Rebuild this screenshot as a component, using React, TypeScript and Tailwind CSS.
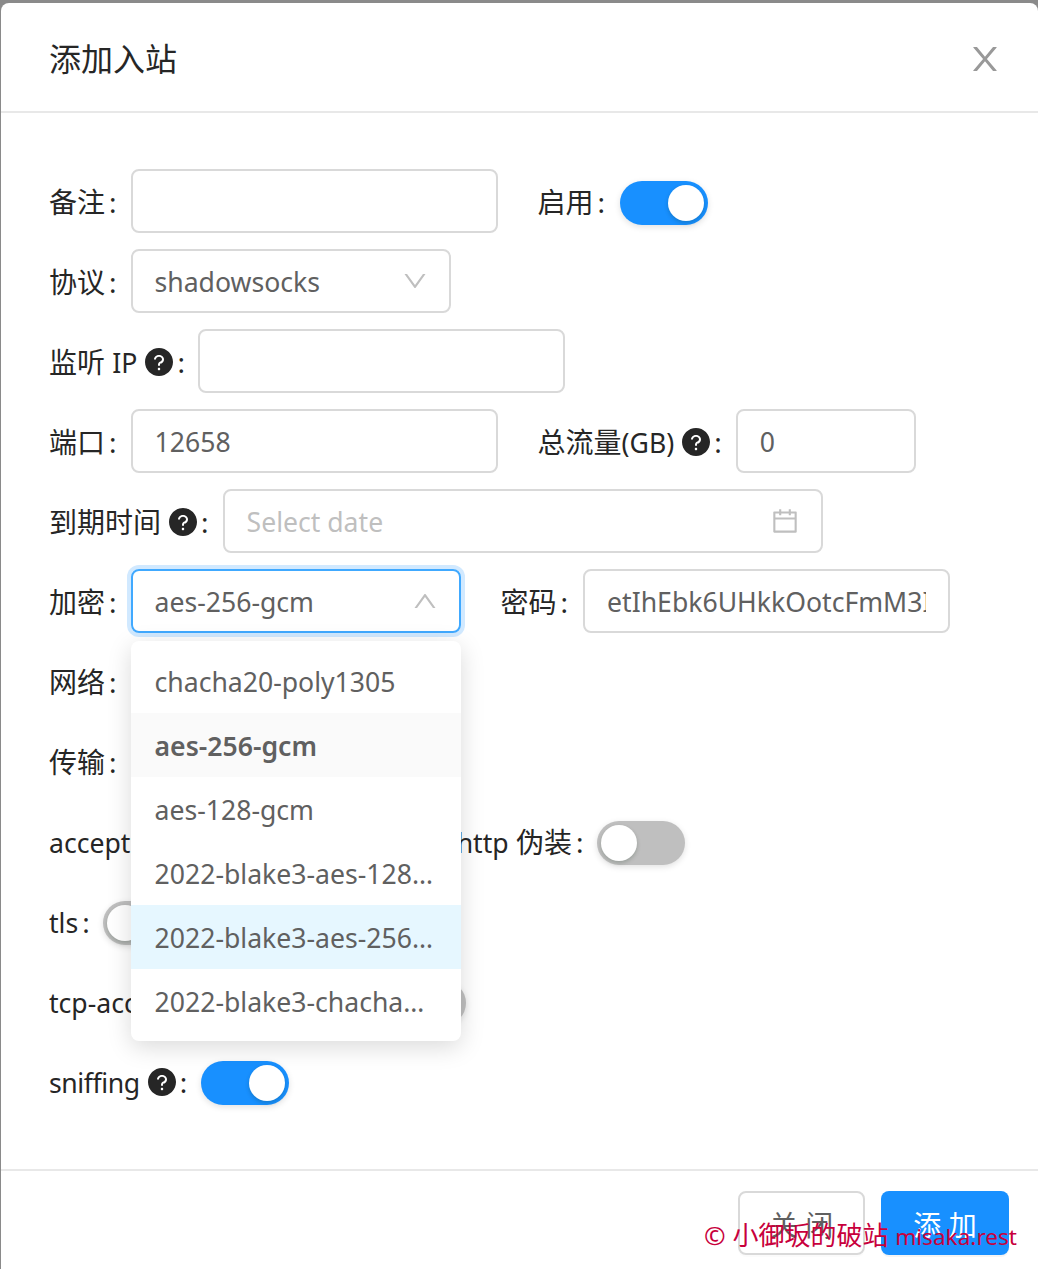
import React from 'react';

const questionPath =
  'M512 64C264.6 64 64 264.6 64 512s200.6 448 448 448 448-200.6 448-448S759.4 64 512 64zm0 708c-22.1 0-40-17.9-40-40s17.9-40 40-40 40 17.9 40 40-17.9 40-40 40zm62.9-219.5a48.3 48.3 0 0 0-30.9 44.8V620c0 4.4-3.6 8-8 8h-48c-4.4 0-8-3.6-8-8v-21.5c0-23.1 6.7-45.9 19.9-64.9 12.9-18.6 30.9-32.8 52.1-40.9 34-13.1 56-41.6 56-72.7 0-44.1-43.1-80-96-80s-96 35.9-96 80v7.6c0 4.4-3.6 8-8 8h-48c-4.4 0-8-3.6-8-8V432c0-39.3 17.2-76 48.4-103.3C430.4 302.4 470 288 512 288s81.6 14.5 111.6 40.7C654.8 356 672 392.7 672 432c0 57.8-38.1 109.8-97.1 132.5z';
const downPath =
  'M884 256h-75c-5.1 0-9.9 2.5-12.9 6.6L512 654.2 227.9 262.6c-3-4.1-7.8-6.6-12.9-6.6h-75c-6.5 0-10.3 7.4-6.5 12.7l352.6 486.1c12.8 17.6 39 17.6 51.7 0l352.6-486.1c3.9-5.3.1-12.7-6.4-12.7z';
const upPath =
  'M890.5 755.3L537.9 269.2c-12.8-17.6-39-17.6-51.7 0L133.5 755.3A8 8 0 0 0 140 768h75c5.1 0 9.9-2.5 12.9-6.6L512 369.8l284.1 391.6c3 4.1 7.8 6.6 12.9 6.6h75c6.5 0 10.3-7.4 6.5-12.7z';
const calendarPath =
  'M880 184H712v-64c0-4.4-3.6-8-8-8h-56c-4.4 0-8 3.6-8 8v64H384v-64c0-4.4-3.6-8-8-8h-56c-4.4 0-8 3.6-8 8v64H144c-17.7 0-32 14.3-32 32v664c0 17.7 14.3 32 32 32h736c17.7 0 32-14.3 32-32V216c0-17.7-14.3-32-32-32zm-40 656H184V460h656v380zM184 392V256h128v48c0 4.4 3.6 8 8 8h56c4.4 0 8-3.6 8-8v-48h256v48c0 4.4 3.6 8 8 8h56c4.4 0 8-3.6 8-8v-48h128v136H184z';
const closePath =
  'M563.8 512l262.5-312.9c4.4-5.2.7-13.1-6.1-13.1h-79.8c-4.7 0-9.2 2.1-12.3 5.7L511.6 449.8 295.1 191.7c-3-3.6-7.5-5.7-12.3-5.7H203c-6.8 0-10.5 7.9-6.1 13.1L459.4 512 196.9 824.9A7.95 7.95 0 0 0 203 838h79.8c4.7 0 9.2-2.1 12.3-5.7l216.5-258.1 216.5 258.1c3 3.6 7.5 5.7 12.3 5.7h79.8c6.8 0 10.5-7.9 6.1-13.1L563.8 512z';

function Icon({ d, className }: { d: string; className?: string }) {
  return (
    <svg viewBox="0 0 1024 1024" fill="currentColor" className={className}>
      <path d={d} />
    </svg>
  );
}

function Help() {
  return (
    <svg viewBox="64 64 896 896" fill="#262626" className="ml-2 h-7 w-7 shrink-0">
      <path d={questionPath} />
    </svg>
  );
}

// latin runs are a bit smaller than the cjk ones in the screenshot
function Lat({ children, className = '' }: { children: React.ReactNode; className?: string }) {
  return <span className={`text-[26.6px] ${className}`}>{children}</span>;
}

function Label({
  children,
  help,
  colon = 'mr-3.5',
}: {
  children: React.ReactNode;
  help?: boolean;
  colon?: string;
}) {
  return (
    <div className="flex shrink-0 items-center whitespace-nowrap pt-0.5 text-[#262626]">
      <span>{children}</span>
      {help && <Help />}
      <span className={`ml-1 ${colon}`}>:</span>
    </div>
  );
}

function Field({ value, className }: { value?: string; className: string }) {
  return (
    <div className={`flex h-16 items-center rounded-lg border-2 border-[#d9d9d9] bg-white px-[22px] text-[26.6px] text-[#606060] ${className}`}>
      <div className="overflow-hidden whitespace-nowrap pt-0.5">{value}</div>
    </div>
  );
}

function Toggle({ on }: { on?: boolean }) {
  return (
    <div className={`mt-1 flex h-11 w-[88px] shrink-0 items-center rounded-full px-1 ${on ? 'justify-end bg-[#1890ff]' : 'justify-start bg-[#bfbfbf]'} shadow-[0_2px_6px_rgba(0,0,0,0.12)]`}>
      <div className="h-9 w-9 rounded-full bg-white shadow-[0_2px_4px_rgba(0,35,11,0.2)]" />
    </div>
  );
}

function Row({ children }: { children: React.ReactNode }) {
  return <div className="mb-4 flex h-16 items-center gap-10">{children}</div>;
}

function Item({ children }: { children: React.ReactNode }) {
  return <div className="flex items-center">{children}</div>;
}

const options = [
  { label: 'chacha20-poly1305' },
  { label: 'aes-256-gcm', selected: true },
  { label: 'aes-128-gcm' },
  { label: '2022-blake3-aes-128-gcm' },
  { label: '2022-blake3-aes-256-gcm', active: true },
  { label: '2022-blake3-chacha20-poly1305' },
];

function EncryptionSelect() {
  return (
    <div className="relative h-16 w-[330px] text-[26.6px]">
      <div className="flex h-16 items-center justify-between rounded-lg border-2 border-[#40a9ff] pl-[22px] pr-5 text-[#606060] shadow-[0_0_0_4px_rgba(24,144,255,0.2)]">
        <span className="pt-0.5">aes-256-gcm</span>
        <Icon d={upPath} className="h-7 w-7 text-[#bfbfbf]" />
      </div>
      <div className="absolute left-0 top-[72px] z-10 w-[330px] rounded-lg bg-white py-2 text-[#606060] shadow-[0_6px_24px_rgba(0,0,0,0.15)]">
        {options.map((o) => (
          <div
            key={o.label}
            className={`flex h-16 items-center px-6 ${o.selected ? 'bg-[#fafafa] font-semibold' : ''} ${o.active ? 'bg-[#e6f7ff]' : ''}`}
          >
            <span className="truncate pt-0.5">{o.label}</span>
          </div>
        ))}
      </div>
    </div>
  );
}

export default function App() {
  return (
    <div className="relative h-[1269px] w-[1038px] overflow-hidden bg-[#8a8a8a] pl-px pt-[3px] font-['Noto_Sans','Noto_Sans_CJK_SC',sans-serif] text-[28px] leading-[44px]">
      <div className="flex h-[1266px] flex-col rounded-t-lg bg-white">
        <div className="flex h-[110px] shrink-0 items-center justify-between border-b-2 border-[#e8e8e8] pl-12 pr-[34px] pt-1">
          <div className="text-[32px] text-[#262626]">添加入站</div>
          <Icon d={closePath} className="h-[38px] w-[38px] text-[#999999]" />
        </div>

        <div className="flex-1 px-12 pt-14">
          <Row>
            <Item>
              <Label>备注</Label>
              <Field className="w-[367px]" />
            </Item>
            <Item>
              <Label colon="mr-[15px]">启用</Label>
              <Toggle on />
            </Item>
          </Row>
          <Row>
            <Item>
              <Label>协议</Label>
              <div className="flex h-16 w-[320px] items-center justify-between rounded-lg border-2 border-[#d9d9d9] pl-[22px] pr-5 text-[26.6px] text-[#606060]">
                <span className="pt-0.5">shadowsocks</span>
                <Icon d={downPath} className="h-7 w-7 text-[#bfbfbf]" />
              </div>
            </Item>
          </Row>
          <Row>
            <Item>
              <Label help colon="mr-[13px]">
                监听 <Lat>IP</Lat>
              </Label>
              <Field className="w-[367px]" />
            </Item>
          </Row>
          <Row>
            <Item>
              <Label>端口</Label>
              <Field value="12658" className="w-[367px]" />
            </Item>
            <Item>
              <Label help>
                总流量<Lat>(GB)</Lat>
              </Label>
              <Field value="0" className="w-[180px]" />
            </Item>
          </Row>
          <Row>
            <Item>
              <Label help>到期时间</Label>
              <div className="flex h-16 w-[600px] items-center justify-between rounded-lg border-2 border-[#d9d9d9] pl-[22px] pr-[21px] text-[26.6px] text-[#bfbfbf]">
                <span className="pt-0.5">Select date</span>
                <Icon d={calendarPath} className="h-[30px] w-[30px]" />
              </div>
            </Item>
          </Row>
          <Row>
            <Item>
              <Label>加密</Label>
              <EncryptionSelect />
            </Item>
            <Item>
              <Label colon="mr-[15px]">密码</Label>
              <Field value="etIhEbk6UHkkOotcFmM3IwQxT9" className="w-[367px]" />
            </Item>
          </Row>
          <Row>
            <Item>
              <Label>网络</Label>
              <Field value="tcp" className="w-[200px]" />
            </Item>
          </Row>
          <Row>
            <Item>
              <Label>传输</Label>
            </Item>
          </Row>
          <Row>
            <Item>
              <Label colon="mr-[13px]">
                <Lat>acceptProxyProtocol</Lat>
              </Label>
              <Toggle />
            </Item>
            <Item>
              <Label>
                <Lat>http</Lat> 伪装
              </Label>
              <Toggle />
            </Item>
          </Row>
          <Row>
            <Item>
              <Label colon="mr-[13px]">
                <Lat>tls</Lat>
              </Label>
              <Toggle />
            </Item>
          </Row>
          <Row>
            <Item>
              <Label colon="mr-[15px]">
                <Lat>tcp-acceptProxyProtocol</Lat>
              </Label>
              <Toggle />
            </Item>
          </Row>
          <Row>
            <Item>
              <Label help>
                <Lat className="tracking-[-0.4px]">sniffing</Lat>
              </Label>
              <Toggle on />
            </Item>
          </Row>
        </div>

        <div className="flex h-[100px] shrink-0 justify-end gap-4 border-t-2 border-[#e8e8e8] pr-[29px] pt-5">
          <div className="flex h-16 w-[127px] items-center justify-center rounded-lg border-2 border-[#d9d9d9] pt-1 text-[#606060] shadow-[0_2px_0_rgba(0,0,0,0.015)]">
            关 闭
          </div>
          <div className="flex h-16 w-[128px] items-center justify-center rounded-lg bg-[#1890ff] pt-1 text-white shadow-[0_2px_0_rgba(0,0,0,0.045)]">
            添 加
          </div>
        </div>
      </div>

      <div className="absolute left-[704px] top-[1216px] z-20 whitespace-nowrap text-[26px] leading-[38px] text-[#c8003c]">
        © 小御坂的破站 <span className="text-[22.6px]">misaka.rest</span>
      </div>
    </div>
  );
}
